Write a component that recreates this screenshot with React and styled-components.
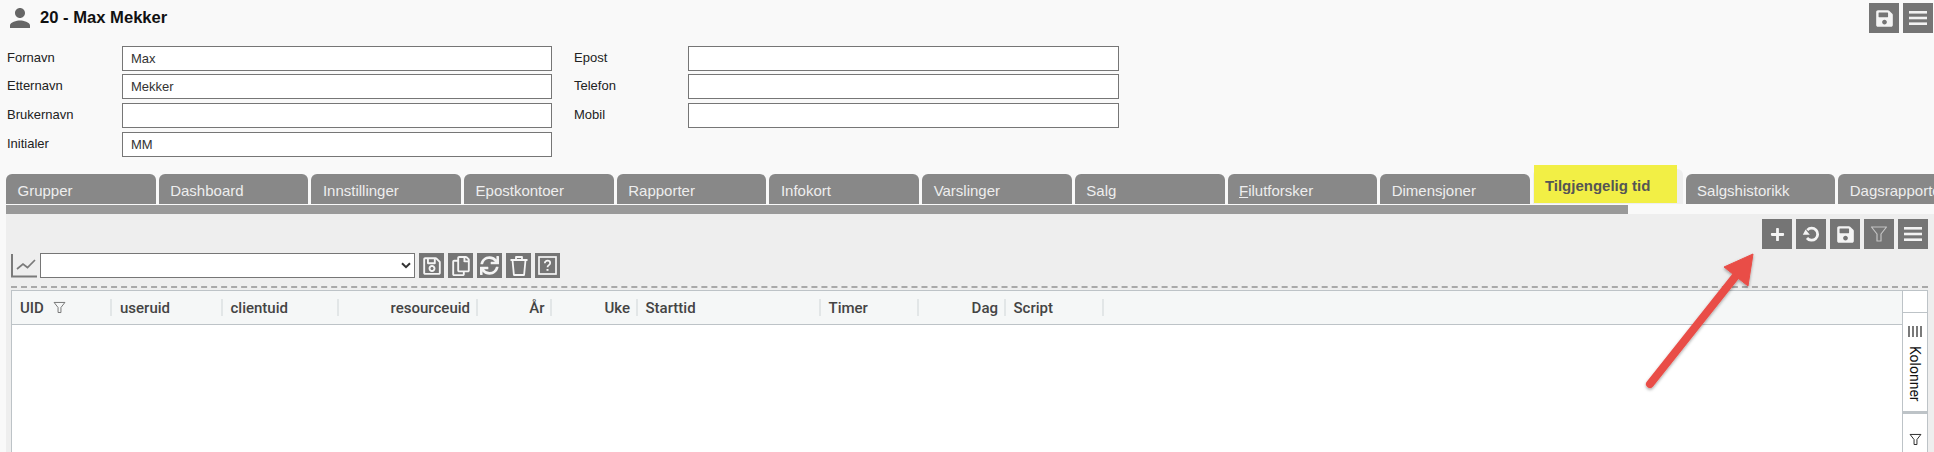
import React from "react";
import styled, { createGlobalStyle } from "styled-components";
import { FaPlus, FaSave, FaRegSave, FaRegCopy, FaSync } from "react-icons/fa";

const Global = createGlobalStyle`
  html, body { margin: 0; padding: 0; background: #f9f9f9; }
  body { font-family: "Liberation Sans", Arial, sans-serif; color: #222; }
  #root { width: 1934px; height: 452px; overflow: hidden; }
`;

const Page = styled.div`
  position: relative;
  width: 1934px;
  height: 452px;
  overflow: hidden;
  display: flex;
  flex-direction: column;
  background: #f9f9f9;
`;
const Header = styled.header`
  display: flex;
  justify-content: space-between;
  align-items: flex-start;
  height: 30px;
  padding: 3px 1px 0 5px;
`;
const Title = styled.h1`
  display: flex;
  align-items: center;
  gap: 5px;
  margin: 0;
  height: 30px;
  font-size: 16.6px;
  font-weight: 700;
  color: #111;
  line-height: 30px;
`;
const Actions = styled.div`
  display: flex;
  gap: ${(p) => p.$gap || 4}px;
`;
const IconButton = styled.button`
  width: ${(p) => p.$size || 30}px;
  height: ${(p) => p.$size || 30}px;
  padding: 0;
  border: 0;
  background: #757575;
  color: #f4f4f4;
  display: flex;
  align-items: center;
  justify-content: center;
`;
const Form = styled.section`
  display: flex;
  gap: 21px;
  margin: 13px 0 0 6px;
`;
const FormColumn = styled.div`
  display: grid;
  grid-template-columns: 116px 430px;
  grid-template-rows: 28px 29px 29px 25px;
  align-content: start;
  & + & { grid-template-columns: 115px 431px; }
`;
const Label = styled.label`
  font-size: 13px;
  line-height: 24px;
  padding-left: 1px;
  color: #222;
`;
const Input = styled.input`
  box-sizing: border-box;
  width: 100%;
  height: 25px;
  border: 1px solid #767676;
  border-radius: 0;
  background: #fff;
  padding: 0 8px;
  font: 13px "Liberation Sans", Arial, sans-serif;
  color: #333;
  outline: none;
`;
const TabStrip = styled.nav`
  display: flex;
  align-items: flex-end;
  gap: 3px;
  height: 35px;
  margin: 12px 0 0 6px;
  flex: none;
`;
const Tab = styled.div`
  position: relative;
  flex: none;
  box-sizing: border-box;
  width: 149.7px;
  height: ${(p) => (p.$active ? 35 : 30)}px;
  padding: 8px 0 0 ${(p) => (p.$active ? 12 : 11.5)}px;
  border-radius: 6px 6px 0 0;
  background: ${(p) => (p.$active ? "#eeeeee" : "#888888")};
  color: ${(p) => (p.$active ? "#555" : "#eeeeee")};
  font-size: 15px;
  font-weight: ${(p) => (p.$active ? 700 : 400)};
  line-height: 17px;
  white-space: nowrap;
`;
const Highlight = styled.span`
  position: absolute;
  left: 1px;
  top: -4px;
  width: 143px;
  height: 38px;
  background: #f2ef45;
`;
const TabLabel = styled.span`
  position: relative;
`;
const ScrollBar = styled.div`
  flex: none;
  width: 1622px;
  height: 9px;
  margin: 1px 0 0 6px;
  background: #999999;
`;
const Panel = styled.main`
  flex: 1;
  min-height: 0;
  margin-left: 6px;
  padding: 5px 6px 0 5px;
  background: #eeeeee;
  display: flex;
  flex-direction: column;
`;
const ToolRow = styled.div`
  display: flex;
  justify-content: flex-end;
  flex: none;
`;
const SelectRow = styled.div`
  display: flex;
  align-items: center;
  height: 25px;
  margin-top: 4px;
  flex: none;
`;
const ChartBox = styled.div`
  width: 29px;
  height: 25px;
  flex: none;
`;
const ViewSelect = styled.select`
  box-sizing: border-box;
  width: 375px;
  height: 25px;
  margin-right: 4px;
  border: 1px solid #767676;
  border-radius: 0;
  appearance: none;
  background: #fff url("data:image/svg+xml,%3Csvg xmlns='http://www.w3.org/2000/svg' width='10' height='7' viewBox='0 0 10 7'%3E%3Cpath d='M1 1.2l4 4 4-4' fill='none' stroke='%23333' stroke-width='2'/%3E%3C/svg%3E") no-repeat right 3px center;
  outline: none;
`;
const Dashed = styled.div`
  flex: none;
  margin-top: 8px;
  border-top: 2px dashed #a9a9a9;
`;
const Grid = styled.div`
  flex: 1;
  min-height: 0;
  margin-top: 2px;
  box-sizing: border-box;
  border: 1px solid #bdc3c7;
  border-bottom: 0;
  background: #fff;
  display: flex;
  overflow: hidden;
`;
const GridMain = styled.div`
  flex: 1;
  min-width: 0;
`;
const HeaderRow = styled.div`
  display: flex;
  align-items: center;
  height: 33px;
  background: #f5f7f7;
  border-bottom: 1px solid #bdc3c7;
`;
const HeaderCell = styled.div`
  flex: none;
  box-sizing: border-box;
  width: ${(p) => p.$w}px;
  height: 17px;
  padding: 0 5.5px 0 8px;
  display: flex;
  align-items: center;
  gap: 9px;
  justify-content: ${(p) => (p.$right ? "flex-end" : "flex-start")};
  border-right: 2px solid #e2e6e7;
  font: 500 15px Roboto, sans-serif;
  color: #444;
`;
const SidePanel = styled.aside`
  flex: none;
  width: 25px;
  box-sizing: border-box;
  border-left: 1px solid #bdc3c7;
  padding-top: 21px;
  display: flex;
  flex-direction: column;
`;
const SideButton = styled.div`
  flex: none;
  box-sizing: border-box;
  height: ${(p) => p.$h}px;
  border-top: 1px solid #bdc3c7;
  border-bottom: ${(p) => (p.$thick ? "2px solid #bdc3c7" : "0")};
  display: flex;
  flex-direction: column;
  align-items: center;
  padding-top: ${(p) => p.$pt}px;
  gap: 9px;
`;
const Vertical = styled.span`
  writing-mode: vertical-rl;
  font: 14px Roboto, sans-serif;
  line-height: 20px;
  color: #111;
`;
const Arrow = styled.svg`
  position: absolute;
  left: 0;
  top: 0;
  pointer-events: none;
`;

const Person = () => (
  <svg width="30" height="30" viewBox="0 0 24 24" fill="#666">
    <path d="M12 12c2.21 0 4-1.79 4-4s-1.79-4-4-4-4 1.79-4 4 1.79 4 4 4zm0 2c-2.67 0-8 1.34-8 4v2h16v-2c0-2.66-5.33-4-8-4z" />
  </svg>
);
const Bars = () => (
  <svg width="20" height="14" viewBox="0 0 20 14" fill="#f2f2f2">
    <rect x="1" y="0" width="18" height="2.6" />
    <rect x="1" y="5.7" width="18" height="2.6" />
    <rect x="1" y="11.4" width="18" height="2.6" />
  </svg>
);
const Funnel = ({ size = 18, color = "#c4c4c4", width = 1.2 }) => (
  <svg width={size} height={size} viewBox="0 0 18 18" fill="none" stroke={color} strokeWidth={width} strokeLinejoin="round">
    <path d="M1.5 2h15L11 9v7l-4-0.1V9z" />
  </svg>
);
const Undo = () => (
  <svg width="18" height="18" viewBox="0 0 18 18" fill="none" stroke="#f4f4f4">
    <path d="M5.3 5.1A6 6 0 1 1 5 13" strokeWidth="2.8" />
    <path d="M0.8 9.8h7L3.6 4.4z" fill="#f4f4f4" strokeWidth="0" />
  </svg>
);
const Chart = () => (
  <svg width="27" height="25" viewBox="0 0 27 25" fill="none" stroke="#7a7a7a" strokeWidth="2">
    <path d="M1 1v22.5h25" />
    <path d="M6 16l6-5 4.5 3.5L24 7" strokeWidth="1.7" />
  </svg>
);
const Trash = () => (
  <svg width="20" height="21" viewBox="0 0 20 21" fill="none" stroke="#f6f6f6" strokeWidth="1.8" strokeLinejoin="round">
    <path d="M1.5 5h17M7 5V2h6v3M3.5 5l1.4 15h10.2L16.5 5" />
  </svg>
);
const Help = () => (
  <svg width="19" height="19" viewBox="0 0 19 19" fill="none" stroke="#f6f6f6" strokeWidth="1.7">
    <rect x="1" y="1" width="17" height="17" />
    <path d="M6.8 7.2c0-1.6 1.2-2.5 2.7-2.5s2.7.9 2.7 2.3c0 2.2-2.7 2-2.7 4.2" />
    <path d="M9.5 13v1.8" strokeWidth="2" />
  </svg>
);

const left = [["Fornavn", "Max"], ["Etternavn", "Mekker"], ["Brukernavn", ""], ["Initialer", "MM"]];
const right = [["Epost", ""], ["Telefon", ""], ["Mobil", ""]];
const tabs = ["Grupper", "Dashboard", "Innstillinger", "Epostkontoer", "Rapporter", "Infokort", "Varslinger", "Salg", "Filutforsker", "Dimensjoner", "Tilgjengelig tid", "Salgshistorikk", "Dagsrapporter"];
const columns = [
  { t: "UID", w: 100, filter: true },
  { t: "useruid", w: 110.5 },
  { t: "clientuid", w: 116.5 },
  { t: "resourceuid", w: 138.5, right: true },
  { t: "År", w: 74.5, right: true },
  { t: "Uke", w: 85.5, right: true },
  { t: "Starttid", w: 183 },
  { t: "Timer", w: 98 },
  { t: "Dag", w: 87, right: true },
  { t: "Script", w: 98 },
];

const FormBlock = ({ rows }) => (
  <FormColumn>
    {rows.map(([l, v]) => (
      <React.Fragment key={l}>
        <Label>{l}</Label>
        <Input defaultValue={v} />
      </React.Fragment>
    ))}
  </FormColumn>
);

export default function App() {
  return (
    <Page>
      <Global />
      <Header>
        <Title><Person />20 - Max Mekker</Title>
        <Actions>
          <IconButton><FaSave size={19} /></IconButton>
          <IconButton><Bars /></IconButton>
        </Actions>
      </Header>
      <Form>
        <FormBlock rows={left} />
        <FormBlock rows={right} />
      </Form>
      <TabStrip>
        {tabs.map((t) => {
          const active = t === "Tilgjengelig tid";
          return (
            <Tab key={t} $active={active}>
              {active && <Highlight />}
              <TabLabel>
                {t === "Filutforsker" ? <><u>F</u>ilutforsker</> : t}
              </TabLabel>
            </Tab>
          );
        })}
      </TabStrip>
      <ScrollBar />
      <Panel>
        <ToolRow>
          <Actions>
            <IconButton><FaPlus size={15} /></IconButton>
            <IconButton><Undo /></IconButton>
            <IconButton><FaSave size={19} /></IconButton>
            <IconButton><Funnel size={18} /></IconButton>
            <IconButton><Bars /></IconButton>
          </Actions>
        </ToolRow>
        <SelectRow>
          <ChartBox><Chart /></ChartBox>
          <ViewSelect />
          <Actions $gap={4}>
            <IconButton $size={25}><FaRegSave size={20} /></IconButton>
            <IconButton $size={25}><FaRegCopy size={20} /></IconButton>
            <IconButton $size={25}><FaSync size={19} /></IconButton>
            <IconButton $size={25}><Trash /></IconButton>
            <IconButton $size={25}><Help /></IconButton>
          </Actions>
        </SelectRow>
        <Dashed />
        <Grid>
          <GridMain>
            <HeaderRow>
              {columns.map((c) => (
                <HeaderCell key={c.t} $w={c.w} $right={c.right}>
                  {c.t}
                  {c.filter && <Funnel size={13} color="#666" width={1.2} />}
                </HeaderCell>
              ))}
            </HeaderRow>
          </GridMain>
          <SidePanel>
            <SideButton $h={101} $pt={13} $thick>
              <svg width="14" height="11" viewBox="0 0 14 11" stroke="#333" strokeWidth="1.3">
                <path d="M1 0v11M5 0v11M9 0v11M13 0v11" />
              </svg>
              <Vertical>Kolonner</Vertical>
            </SideButton>
            <SideButton $h={60} $pt={19}>
              <Funnel size={13} color="#222" width={1.3} />
            </SideButton>
          </SidePanel>
        </Grid>
      </Panel>
      <Arrow width="1934" height="452" viewBox="0 0 1934 452">
        <defs>
          <filter id="arrowShadow" x="-20%" y="-20%" width="140%" height="140%">
            <feDropShadow dx="0" dy="1.5" stdDeviation="1.5" floodColor="#000" floodOpacity="0.35" />
          </filter>
        </defs>
        <g filter="url(#arrowShadow)" fill="#e94d47" stroke="#e94d47">
          <path d="M1650 384L1735 277" strokeWidth="8" strokeLinecap="round" fill="none" />
          <path d="M1753 254L1724 267L1748 286Z" strokeWidth="1" />
        </g>
      </Arrow>
    </Page>
  );
}
